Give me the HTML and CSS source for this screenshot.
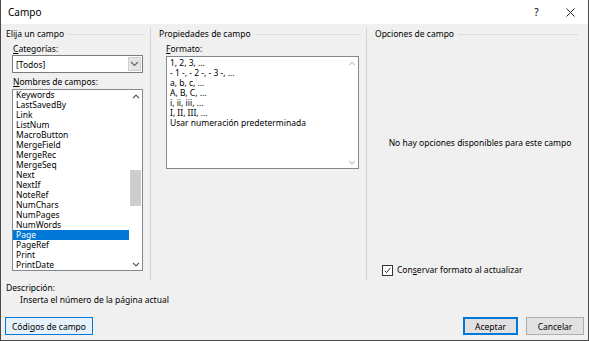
FILE: index.html
```
<!doctype html>
<html>
	<head>
		<meta charset="utf-8" />
		<title>Campo</title>
		<link rel="stylesheet" href="styles.css">
	</head>
	<body>
		<div class="dialog">
			<div class="titlebar">
				<span class="title">Campo</span>
				<span class="tb_help">?</span>
				<span class="tb_close">
					<svg width="9" height="9" viewBox="0 0 9 9"><path d="M0.5 0.5 L8.5 8.5 M8.5 0.5 L0.5 8.5" stroke="#222" stroke-width="1" fill="none"/></svg>
				</span>
			</div>
			<div class="main">
				<div class="col col_pick">
					<div class="group_head"><span>Elija un campo</span><i></i></div>
					<div class="label"><u>C</u>ategorías:</div>
					<div class="combo">
						<span class="combo_text">[Todos]</span>
						<span class="combo_btn">
							<svg width="9" height="6" viewBox="0 0 9 6"><path d="M1 1 L4.5 4.5 L8 1" stroke="#666" stroke-width="1.2" fill="none"/></svg>
						</span>
					</div>
					<div class="label"><u>N</u>ombres de campos:</div>
					<div class="listbox names">
						<div class="items">
							<div class="item">Keywords</div>
							<div class="item">LastSavedBy</div>
							<div class="item">Link</div>
							<div class="item">ListNum</div>
							<div class="item">MacroButton</div>
							<div class="item">MergeField</div>
							<div class="item">MergeRec</div>
							<div class="item">MergeSeq</div>
							<div class="item">Next</div>
							<div class="item">NextIf</div>
							<div class="item">NoteRef</div>
							<div class="item">NumChars</div>
							<div class="item">NumPages</div>
							<div class="item">NumWords</div>
							<div class="item selected">Page</div>
							<div class="item">PageRef</div>
							<div class="item">Print</div>
							<div class="item">PrintDate</div>
						</div>
						<div class="vscroll">
							<svg class="arr" width="8" height="5" viewBox="0 0 8 5"><path d="M1 4.2 L4 1.2 L7 4.2" stroke="#555" stroke-width="1.2" fill="none"/></svg>
							<div class="track"><div class="thumb"></div></div>
							<svg class="arr" width="8" height="5" viewBox="0 0 8 5"><path d="M1 0.8 L4 3.8 L7 0.8" stroke="#555" stroke-width="1.2" fill="none"/></svg>
						</div>
					</div>
				</div>
				<div class="col col_props">
					<div class="group_head"><span>Propiedades de campo</span><i></i></div>
					<div class="label"><u>F</u>ormato:</div>
					<div class="listbox formats">
						<div class="items">
							<div class="item">1, 2, 3, ...</div>
							<div class="item">- 1 -, - 2 -, - 3 -, ...</div>
							<div class="item">a, b, c, ...</div>
							<div class="item">A, B, C, ...</div>
							<div class="item">i, ii, iii, ...</div>
							<div class="item">I, II, III, ...</div>
							<div class="item">Usar numeración predeterminada</div>
						</div>
						<div class="vscroll off">
							<svg class="arr" width="8" height="5" viewBox="0 0 8 5"><path d="M1 4.2 L4 1.2 L7 4.2" stroke="#c8c8c8" stroke-width="1.2" fill="none"/></svg>
							<div class="track"></div>
							<svg class="arr" width="8" height="5" viewBox="0 0 8 5"><path d="M1 0.8 L4 3.8 L7 0.8" stroke="#c8c8c8" stroke-width="1.2" fill="none"/></svg>
						</div>
					</div>
				</div>
				<div class="col col_opts">
					<div class="group_head"><span>Opciones de campo</span><i></i></div>
					<div class="no_opts">No hay opciones disponibles para este campo</div>
					<div class="check_row">
						<span class="checkbox">
							<svg width="7" height="7" viewBox="0 0 8 8"><path d="M0.8 4.2 L3 6.4 L7.2 1.2" stroke="#222" stroke-width="1.1" fill="none"/></svg>
						</span>
						<span>Con<u>s</u>ervar formato al actualizar</span>
					</div>
				</div>
			</div>
			<div class="desc">
				<div class="desc_label">Descripción:</div>
				<div class="desc_text">Inserta el número de la página actual</div>
			</div>
			<div class="buttons">
				<button class="btn btn_codes">Códi<u>g</u>os de campo</button>
				<span class="spacer"></span>
				<button class="btn btn_default">Aceptar</button>
				<button class="btn">Cancelar</button>
			</div>
		</div>
	</body>
</html>
```
FILE: styles.css
```
html, body {
	margin : 0;
	padding : 0;
}
body {
	font-family : "Noto Sans", "Open Sans", sans-serif;
	font-size : 8.5px;
	color : #000;
	background : #ffffff;
}
u {
	text-decoration-thickness : 1px;
	text-underline-offset : 1px;
}
.dialog {
	width : 587px;
	height : 340px;
	border : 1px solid #4a4a4a;
	border-top : none;
	background : #f0f0f0;
	display : flex;
	flex-direction : column;
}
.titlebar {
	height : 24px;
	background : #ffffff;
	display : flex;
	align-items : center;
	padding-left : 7px;
}
.title {
	font-size : 10px;
	flex : 1;
}
.tb_help {
	font-size : 10px;
	width : 33px;
	text-align : center;
}
.tb_close {
	width : 35px;
	display : flex;
	justify-content : center;
}
.main {
	margin-top : 4px;
	height : 252px;
	display : grid;
	grid-template-columns : 149px 216px 1fr;
}
.col {
	display : flex;
	flex-direction : column;
}
.col_props, .col_opts {
	border-left : 1px solid #d2d2d2;
}
.col_pick {
	padding-left : 5px;
}
.col_props {
	padding-left : 8px;
}
.col_opts {
	padding-left : 8px;
	padding-right : 5px;
}
.group_head {
	display : flex;
	align-items : center;
	line-height : 12px;
	height : 12px;
	padding-right : 5px;
}
.group_head i {
	flex : 1;
	border-top : 1px solid #dcdcdc;
	margin-left : 4px;
}
.label {
	line-height : 12px;
	margin-top : 3px;
	padding-left : 7px;
}
.combo {
	margin-left : 6px;
	width : 129px;
	height : 16px;
	border : 1px solid #7a7a7a;
	background : #ffffff;
	display : flex;
	align-items : center;
}
.combo_text {
	flex : 1;
	padding-left : 3px;
}
.combo_btn {
	width : 13px;
	height : 14px;
	margin-right : 1px;
	background : #e5e5e5;
	border : 1px solid #cfcfcf;
	display : flex;
	align-items : center;
	justify-content : center;
	box-sizing : border-box;
}
.listbox {
	background : #ffffff;
	border : 1px solid #828790;
	display : flex;
	overflow : hidden;
}
.names {
	margin-left : 6px;
	width : 129px;
	height : 180px;
	margin-top : 1px;
}
.formats {
	margin-left : 7px;
	width : 191px;
	height : 111px;
	margin-top : 1px;
}
.items {
	flex : 1;
	padding-top : 1px;
}
.names .items {
	padding-top : 0;
}
.item {
	line-height : 10px;
	height : 10px;
	padding-left : 3px;
	white-space : nowrap;
}
.item.selected {
	background : #0078d7;
	color : #ffffff;
}
.vscroll {
	width : 13px;
	display : flex;
	flex-direction : column;
	align-items : center;
	padding : 4px 0 3px 0;
}
.vscroll .track {
	flex : 1;
	width : 100%;
	position : relative;
}
.vscroll .thumb {
	position : absolute;
	left : 1px;
	right : 1px;
	top : 71px;
	height : 36px;
	background : #cdcdcd;
}
.no_opts {
	margin-top : 97px;
	line-height : 12px;
	text-align : center;
	padding-left : 2px;
}
.check_row {
	margin-top : auto;
	margin-bottom : 4px;
	display : flex;
	align-items : center;
	line-height : 12px;
	padding-left : 7px;
}
.checkbox {
	width : 9px;
	height : 9px;
	border : 1px solid #333;
	background : #fff;
	margin-right : 4px;
	display : flex;
	align-items : center;
	justify-content : center;
}
.desc {
	margin-top : 2px;
	padding-left : 5px;
	line-height : 12px;
}
.desc_text {
	padding-left : 14px;
}
.buttons {
	margin-top : 11px;
	display : flex;
	padding : 0 4px;
	gap : 8px;
}
.spacer {
	flex : 1;
}
.btn {
	font-family : inherit;
	font-size : 8.5px;
	color : #000;
	height : 18px;
	width : 58px;
	padding : 0;
	background : #e1e1e1;
	border : 1px solid #adadad;
	border-radius : 0;
}
.btn_codes {
	width : 88px;
	background : #e5f1fb;
	border : 1px solid #0078d7;
}
.btn_default {
	width : 55px;
	border : 2px solid #0078d7;
}
```
